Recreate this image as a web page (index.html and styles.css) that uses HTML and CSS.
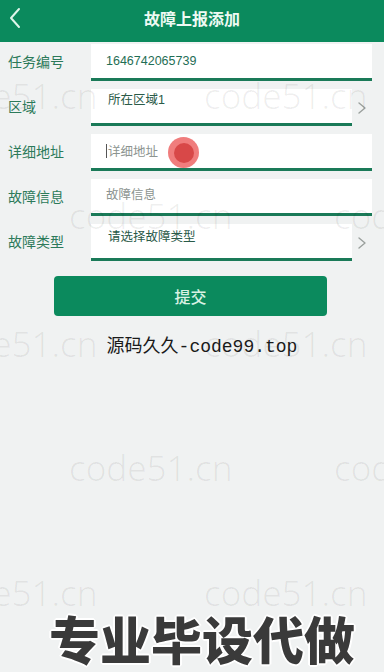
FILE: index.html
```html
<!DOCTYPE html>
<html lang="zh">
<head>
<meta charset="utf-8">
<title>故障上报添加</title>
<link rel="stylesheet" href="styles.css">
</head>
<body>
<div class="page">
  <header class="topbar">
    <svg class="back" width="14" height="22" viewBox="0 0 14 22"><path d="M11 2 L3 11 L11 20" fill="none" stroke="#dff5ea" stroke-width="2" stroke-linecap="round" stroke-linejoin="round"/></svg>
    <h1 class="title">故障上报添加</h1>
  </header>

  <form class="form">
    <div class="row">
      <label class="label">任务编号</label>
      <div class="field"><span class="value">1646742065739</span></div>
    </div>
    <div class="row">
      <label class="label">区域</label>
      <div class="field picker p1"><span class="pick-text">所在区域1</span></div>
      <svg class="chev" width="20" height="14" viewBox="0 0 20 14"><path d="M7 2 L13 7 L7 12" fill="none" stroke="#9aa09d" stroke-width="1.4" stroke-linecap="round" stroke-linejoin="round"/></svg>
    </div>
    <div class="row">
      <label class="label">详细地址</label>
      <div class="field"><span class="caret"></span><span class="ph">详细地址</span></div>
    </div>
    <div class="row">
      <label class="label">故障信息</label>
      <div class="field f4"><span class="ph">故障信息</span></div>
    </div>
    <div class="row">
      <label class="label">故障类型</label>
      <div class="field picker p2"><span class="pick-text">请选择故障类型</span></div>
      <svg class="chev" width="20" height="14" viewBox="0 0 20 14"><path d="M7 2 L13 7 L7 12" fill="none" stroke="#9aa09d" stroke-width="1.4" stroke-linecap="round" stroke-linejoin="round"/></svg>
    </div>
    <button type="button" class="submit">提交</button>
  </form>

  <p class="caption">源码久久-code99.top</p>

  <div class="promo">专业毕设代做</div>

  <div class="touch"><span class="touch-core"></span></div>

  <div class="watermarks">
    <span class="wm w1">code51.cn</span>
    <span class="wm w2">code51.cn</span>
    <span class="wm w3">code51.cn</span>
    <span class="wm w4">code51.cn</span>
    <span class="wm w5">code51.cn</span>
    <span class="wm w6">code51.cn</span>
    <span class="wm w7">code51.cn</span>
    <span class="wm w8">code51.cn</span>
    <span class="wm w9">code51.cn</span>
    <span class="wm w10">code51.cn</span>
  </div>
</div>
</body>
</html>
```
FILE: styles.css
```css
* { box-sizing: border-box; }
html, body { margin: 0; padding: 0; }
body {
  background: #f0f2f2;
  font-family: "Noto Sans CJK SC", "Noto Sans", sans-serif;
  width: 384px;
  height: 672px;
  overflow: hidden;
}
.page { position: relative; width: 384px; height: 672px; overflow: hidden; }

.topbar {
  height: 42px;
  background: #0b8a5d;
  display: flex;
  align-items: center;
  justify-content: center;
  position: relative;
}
.back { position: absolute; left: 8px; top: 7px; }
.title {
  margin: 0;
  color: #eefaf3;
  font-size: 16px;
  font-weight: 700;
  line-height: 20px;
  margin-top: -7px;
}

.form { display: flex; flex-direction: column; gap: 8px; padding-top: 2px; }
.row {
  height: 37px;
  display: flex;
  align-items: flex-start;
}
.label {
  width: 91px;
  padding-left: 8px;
  padding-top: 7px;
  color: #2c7a5a;
  font-size: 14px;
  line-height: 20px;
}
.field {
  width: 281px;
  height: 37px;
  background: #ffffff;
  border-bottom: 3px solid #1a7a58;
  display: flex;
  align-items: center;
  padding-left: 15px;
}
.field.f4 { align-items: flex-start; padding-top: 6px; }
.field.picker {
  width: 261px;
  align-items: flex-start;
  padding-left: 17px;
}
.field.p1 { padding-top: 2px; }
.field.p2 { padding-top: 4px; }
.value { color: #1f6e55; font-size: 12.5px; line-height: 18px; font-family: "Liberation Sans", "Noto Sans CJK SC", sans-serif; }
.pick-text { color: #2a5a48; font-size: 12.5px; line-height: 18px; font-family: "Liberation Sans", "Noto Sans CJK SC", sans-serif; }
.ph { color: #8c9490; font-size: 12.5px; line-height: 18px; }
.caret { width: 1px; height: 14px; background: #555; margin-right: 1px; }
.chev { margin-top: 12px; }

.submit {
  margin: 7px 0 0 54px;
  width: 273px;
  height: 40px;
  border: 0;
  border-radius: 4px;
  background: #0b8a5d;
  color: #d9f2e4;
  font-size: 16px;
  font-family: "Noto Sans CJK SC", sans-serif;
  font-weight: 500;
}

.caption {
  margin: 18px 0 0 0;
  text-align: center;
  padding-left: 20px;
  font-size: 18px;
  line-height: 26px;
  color: #1a1a1a;
  font-family: "Liberation Mono", "Noto Sans CJK SC", monospace;
}

.promo {
  position: absolute;
  left: 0;
  right: 0;
  top: 608px;
  text-align: center;
  padding-left: 20px;
  font-size: 51px;
  line-height: 60px;
  font-weight: 900;
  color: #3a3a3a;
  font-family: "Noto Sans CJK SC", sans-serif;
  text-shadow: 2px 0 0 #fff, -2px 0 0 #fff, 0 2px 0 #fff, 0 -2px 0 #fff, 1px 1px 0 #fff, -1px -1px 0 #fff, 1px -1px 0 #fff, -1px 1px 0 #fff;
}

.touch {
  position: absolute;
  left: 168px;
  top: 137px;
  width: 31px;
  height: 31px;
  border-radius: 50%;
  background: #f07d7d;
  display: flex;
  align-items: center;
  justify-content: center;
}
.touch-core { width: 20px; height: 20px; border-radius: 50%; background: #d84848; }

.watermarks { position: absolute; inset: 0; pointer-events: none; }
.wm {
  position: absolute;
  font-family: "Noto Sans", sans-serif;
  font-weight: 300;
  font-size: 35px;
  line-height: 40px;
  color: rgba(0, 0, 0, 0.065);
  white-space: nowrap;
}
.w1 { left: -66px; top: 76px; }
.w2 { left: 204px; top: 76px; }
.w3 { left: 69px; top: 196px; }
.w4 { left: 334px; top: 196px; }
.w5 { left: -66px; top: 324px; }
.w6 { left: 204px; top: 324px; }
.w7 { left: 69px; top: 448px; }
.w8 { left: 334px; top: 448px; }
.w9 { left: -66px; top: 573px; }
.w10 { left: 204px; top: 573px; }
```
